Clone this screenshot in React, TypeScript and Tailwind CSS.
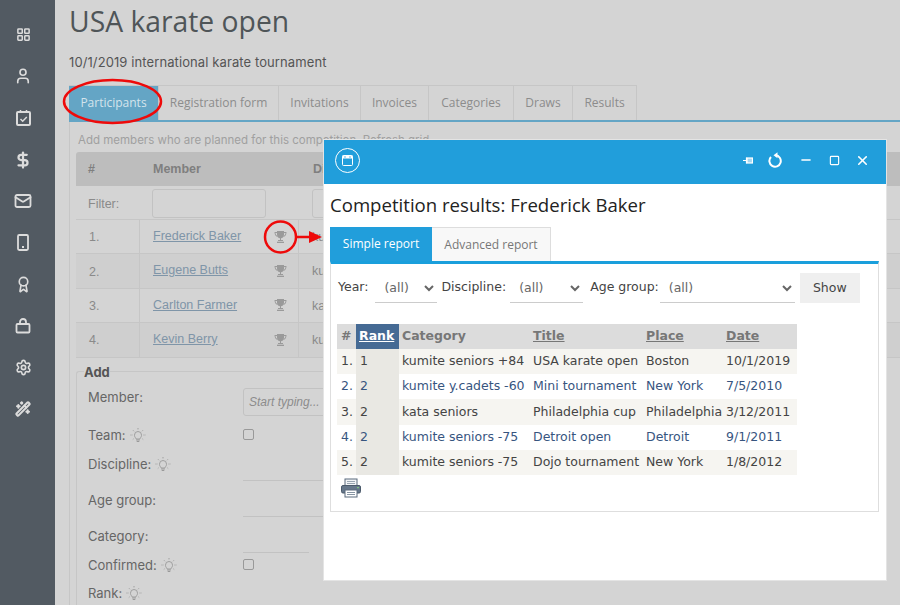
import React from 'react';
import { LayoutGrid, User, DollarSign, Mail, Award, Settings, Wand2, Minus, Square, X } from 'lucide-react';

const Bag = () => (
  <svg width="16" height="16" viewBox="0 0 16 16" fill="none" stroke="currentColor" strokeWidth="1.8"><rect x="1.500" y="6" width="13" height="8.500" rx="1" /><path d="M5 6V4a3 3 0 0 1 6 0v2" /></svg>
);

const Phone = () => (
  <svg width="16" height="17" viewBox="0 0 16 17" fill="none" stroke="currentColor" strokeWidth="1.800"><rect x="3" y="1" width="10" height="15" rx="1.200" /><path d="M7 13h2" /></svg>
);

const Checklist = () => (
  <svg width="15" height="16" viewBox="0 0 15 16" fill="none" stroke="currentColor" strokeWidth="2"><rect x="1" y="2" width="13" height="13" rx="1" /><path d="M4.500 0v3M10.500 0v3" strokeWidth="1.500" /><path d="M4.500 9l2.200 2.200L10.800 7" strokeWidth="1.500" /></svg>
);

const Refresh = () => (
  <svg width="15" height="16" viewBox="0 0 15 16" fill="none" stroke="white" strokeWidth="2"><path d="M3 5A5.700 5.700 0 1 0 7.500 3.300" /><path d="M5.500 3.300L9.500 0.300v6z" fill="white" stroke="none" /></svg>
);

const Trophy = () => (
  <svg width="13" height="12" viewBox="0 0 13 12" fill="#9a9a9a"><path d="M3 0h7v3.500C10 6 8.500 7 7 7.300V9h2v1H4V9h2V7.300C4.500 7 3 6 3 3.500z" /><path d="M0.500 1h2.500v1H1.500c0 1.500 1 2.500 2 3L3.500 6C1.500 5.300 0.500 3.500 0.500 1zM12.500 1H10v1h1.500c0 1.500-1 2.500-2 3l0 1c2-.7 3-2.500 3-5z" /><rect x="3" y="10.700" width="7" height="1.300" /></svg>
);

const Bulb = () => (
  <svg width="16" height="17" viewBox="0 0 16 17" fill="none" stroke="#999" strokeWidth="0.900" className="inline-block ml-1 align-[-4px]">
    <path d="M5.300 10.500C4.500 9.500 4.500 8.800 4.500 8a3.500 3.500 0 0 1 7 0c0 .8 0 1.500-.8 2.500-.4.500-.7 1-.7 1.500H6c0-.5-.3-1-.7-1.500z" />
    <path d="M6.200 13h3.600M6.700 14.500h2.600" strokeWidth="1.200" />
    <path d="M8 1v2M2.800 3l1.300 1.400M13.200 3l-1.300 1.400M0.500 8h2M13.500 8h2M2.800 12.500l1.200-1M13.200 12.500l-1.200-1" strokeDasharray="1 0.600" />
  </svg>
);

const Printer = () => (
  <svg width="20" height="20" viewBox="0 0 20 20">
    <rect x="4" y="1" width="12" height="7" fill="#f2f4f6" stroke="#5a6a7c" />
    <path d="M6 3.500h8M6 5.500h8" stroke="#9aa6b2" />
    <rect x="0.500" y="7.500" width="19" height="7.500" rx="1.500" fill="#66778a" stroke="#4b5a6b" />
    <rect x="16" y="9" width="2" height="1.200" fill="#7ec07e" />
    <rect x="4" y="12" width="12" height="7" fill="#fff" stroke="#5a6a7c" />
    <path d="M6 14.500h8M6 16.500h8" stroke="#8795a3" />
  </svg>
);

const navIcons = [
  <LayoutGrid size={15} strokeWidth={2.400} />, <User size={18} strokeWidth={2.200} />, <Checklist />, <DollarSign size={18} strokeWidth={3} />, <Mail size={18} strokeWidth={2.400} />,
  <Phone />, <Award size={17} strokeWidth={2.300} />, <Bag />, <Settings size={17} strokeWidth={2.300} />, <Wand2 size={16} strokeWidth={3} />,
];

const mainTabs = [
  ['Participants', 'w-[90px]'],
  ['Registration form', 'w-[120px]'],
  ['Invitations', 'w-[82px]'],
  ['Invoices', 'w-[68px]'],
  ['Categories', 'w-[85px]'],
  ['Draws', 'w-[59px]'],
  ['Results', 'w-[64px]'],
];

const members = [
  ['1.', 'Frederick Baker', 'ku'],
  ['2.', 'Eugene Butts', 'ku'],
  ['3.', 'Carlton Farmer', 'ka'],
  ['4.', 'Kevin Berry', 'ku'],
];

const results = [
  ['1.', '1', 'kumite seniors +84', 'USA karate open', 'Boston', '10/1/2019'],
  ['2.', '2', 'kumite y.cadets -60', 'Mini tournament', 'New York', '7/5/2010'],
  ['3.', '2', 'kata seniors', 'Philadelphia cup', 'Philadelphia', '3/12/2011'],
  ['4.', '2', 'kumite seniors -75', 'Detroit open', 'Detroit', '9/1/2011'],
  ['5.', '2', 'kumite seniors -75', 'Dojo tournament', 'New York', '1/8/2012'],
];

const labelCls = "w-[155px] shrink-0 text-[13px] text-[#666] font-['Inter',sans-serif]";

const App: React.FC = () => {
  return (
    <div className="relative flex w-[900px] h-[605px] overflow-hidden bg-[#d4d4d4]">
      {/* Sidebar */}
      <aside className="w-[55px] shrink-0 bg-[#525a62] flex flex-col pt-[14px] pr-[9px] text-[#dcdcdc]">
        {navIcons.map((icon, i) => (
          <div key={i} className="h-[41.600px] flex items-center justify-center">{icon}</div>
        ))}
      </aside>

      {/* Page */}
      <main className="flex-1 pl-[14px] min-w-0">
        <h1 className="h-[43px] text-[28.300px] leading-[43px] text-[#4f5558] font-['Open_Sans',sans-serif]">USA karate open</h1>
        <p className="mt-[10px] h-[19px] text-[13px] leading-[19px] tracking-[0.100px] text-[#555] font-['Inter',sans-serif] whitespace-nowrap">10/1/2019 international karate tournament</p>

        <div className="flex mt-[13px] h-[35px]">
          {mainTabs.map(([name, w], i) => (
            <div key={name} className={`${w} flex items-center justify-center text-[12px] font-['Open_Sans',sans-serif] border-t border-r border-[#c6c6c6] ${i === 0 ? 'bg-[#64a5c5] text-[#d4e4ec]' : 'text-[#8c8c8c]'}`}>{name}</div>
          ))}
        </div>
        <div className="h-[2px] bg-[#64a5c5]" />

        <section className="border-l border-[#c6c6c6] pl-[6px] h-[483px]">
          <p className="pt-[11px] pl-[2px] h-[30px] text-[11.500px] leading-[15px] text-[#a0a0a0] font-['Inter',sans-serif] whitespace-nowrap">Add members who are planned for this competition. Refresh grid</p>

          {/* Members grid */}
          <div className="w-[900px] text-[12.500px] font-['Liberation_Sans',sans-serif]">
            <div className="flex h-[34px] items-center pt-[1px] bg-[#bdbdbd] font-bold text-[#7f7f7f] rounded-tl-[3px]">
              <div className="w-[64px] pl-[12px]">#</div>
              <div className="w-[159px] pl-[13px]">Member</div>
              <div className="pl-[14px]">Discipline</div>
            </div>
            <div className="flex h-[34px] items-center pt-[1px] text-[#8a8a8a] border-b border-[#c6c6c6]">
              <div className="w-[64px] pl-[12px] pt-[2px]">Filter:</div>
              <div className="w-[159px] pl-[12px]"><div className="w-[114px] h-[29px] border border-[#c2c2c2] rounded-[3px]" /></div>
              <div className="pl-[13px]"><div className="w-[114px] h-[29px] border border-[#c2c2c2] rounded-[3px]" /></div>
            </div>
            {members.map(([n, name, d], i) => (
              <div key={n} className={`flex h-[34.400px] items-stretch border-b border-[#c6c6c6] text-[#8a8a8a] ${i % 2 === 1 ? 'bg-[#cfcfcf]' : ''}`}>
                <div className="w-[64px] pl-[13px] pt-[2px] flex items-center border-r border-[#c6c6c6]">{n}</div>
                <div className="w-[159px] pl-[13px] pr-[11px] flex items-center justify-between border-r border-[#c6c6c6]">
                  <a className="underline text-[#7f95a8] -mt-[1px]">{name}</a>
                  <Trophy />
                </div>
                <div className="pl-[13px] pt-[1px] flex items-center">{d}</div>
              </div>
            ))}
          </div>

          {/* Add form */}
          <fieldset className="mt-[6px] border-t border-l border-[#c6c6c6] rounded-tl-[3px] pl-[11px] w-[700px] h-[300px]">
            <legend className="-ml-[4px] text-[13px] font-bold text-[#555] font-['Inter',sans-serif] leading-[16px]">Add</legend>
            <div className="flex items-start h-[45px] pt-[8px]">
              <div className={labelCls}>Member:</div>
              <div className="w-[200px] h-[28px] border border-[#c2c2c2] rounded-[3px] pl-[5px] text-[12px] leading-[26px] italic text-[#8c8c8c] font-['Liberation_Sans',sans-serif]">Start typing...</div>
            </div>
            <div className="flex items-start h-[28px]">
              <div className={labelCls + ' pt-[1px]'}>Team:<Bulb /></div>
              <div className="w-[11px] h-[11px] mt-[4px] border border-[#999] rounded-[2px]" />
            </div>
            <div className="flex items-start h-[28px]">
              <div className={labelCls + ' pt-[2px]'}>Discipline:<Bulb /></div>
              <div className="w-[200px] h-[28px] border-b border-[#c2c2c2]" />
            </div>
            <div className="flex items-start h-[36px]">
              <div className={labelCls + ' pt-[10px]'}>Age group:</div>
              <div className="w-[200px] h-[36px] border-b border-[#c2c2c2]" />
            </div>
            <div className="flex items-start h-[36px]">
              <div className={labelCls + ' pt-[10px]'}>Category:</div>
              <div className="w-[66px] h-[36px] border-b border-[#c2c2c2]" />
            </div>
            <div className="flex items-start h-[28px]">
              <div className={labelCls + ' pt-[3px]'}>Confirmed:<Bulb /></div>
              <div className="w-[11px] h-[11px] mt-[6px] border border-[#999] rounded-[2px]" />
            </div>
            <div className="flex items-start h-[24px]">
              <div className={labelCls + ' pt-[3px]'}>Rank:<Bulb /></div>
            </div>
          </fieldset>
        </section>
      </main>

      {/* Red annotations */}
      <svg className="absolute inset-0 pointer-events-none" width="900" height="605" fill="none">
        <ellipse cx="112.500" cy="101.500" rx="48.500" ry="21.500" stroke="#ee0a0a" strokeWidth="2.500" />
        <circle cx="280.500" cy="237" r="15.500" stroke="#ee0a0a" strokeWidth="2.500" />
        <path d="M296 237h14" stroke="#ee0a0a" strokeWidth="2.500" />
        <path d="M309 231l13 6-13 6z" fill="#ee0a0a" />
      </svg>

      {/* Results window */}
      <div className="absolute left-[323px] top-[139px] w-[564px] h-[442px] bg-white border border-[#e4e4e4] flex flex-col">
        <div className="h-[44px] shrink-0 bg-[#219edb] flex items-center pl-[11px] pr-[16px] pb-[4px] text-white">
          <div className="w-[25px] h-[25px] rounded-full border border-white flex items-center justify-center">
            <svg width="11" height="11" viewBox="0 0 11 11" fill="none" stroke="white"><rect x="0.500" y="0.500" width="10" height="10" rx="1" /><rect x="1" y="1" width="9" height="2" fill="white" /><path d="M3 1v2M8 1v2" stroke="#219edb" strokeWidth="0.700" /></svg>
          </div>
          <div className="ml-auto flex items-center gap-[15px]">
            <svg width="10" height="7" viewBox="0 0 10 7" fill="none" stroke="white" strokeWidth="1.200"><path d="M0 3.500h4M3.500 0.500v6" /><rect x="4" y="1" width="5.500" height="5" fill="white" fillOpacity="0.600" /></svg>
            <Refresh />
            <Minus size={14} strokeWidth={2.500} className="ml-[1px]" />
            <Square size={11} strokeWidth={2.500} className="ml-[1px]" />
            <X size={15} strokeWidth={2.500} />
          </div>
        </div>

        <div className="flex-1 px-[6px] font-['Open_Sans',sans-serif]">
          <h2 className="h-[43px] pt-[8px] text-[18.600px] leading-[26px] text-[#222] whitespace-nowrap">Competition results: Frederick Baker</h2>

          <div className="flex h-[34px]">
            <div className="w-[102px] bg-[#219edb] text-white text-[12px] flex items-center justify-center">Simple report</div>
            <div className="w-[119px] bg-[#f8f8f8] border-t border-r border-[#ddd] text-[#777] text-[12px] flex items-center justify-center">Advanced report</div>
          </div>
          <div className="w-[549px] h-[251px] border-t-[3px] border-t-[#1a9fdc] border-x border-b border-[#dedede] pl-[6px] font-['DejaVu_Sans',sans-serif] text-[12.500px]">
            <div className="flex items-start h-[60px] pt-[9px] text-[#444]">
              <span className="ml-[1px] mt-[5px]">Year:</span>
              <select className="ml-[7px] w-[62px] h-[30px] pl-[5px] border-b border-[#ccc] bg-white text-[#666] outline-none"><option>(all)</option></select>
              <span className="ml-[4px] mt-[5px]">Discipline:</span>
              <select className="ml-[4px] w-[73px] h-[30px] pl-[5px] border-b border-[#ccc] bg-white text-[#666] outline-none"><option>(all)</option></select>
              <span className="ml-[7px] mt-[5px]">Age group:</span>
              <select className="ml-[1px] w-[135px] h-[30px] pl-[5px] border-b border-[#ccc] bg-white text-[#666] outline-none"><option>(all)</option></select>
              <button className="ml-[5px] w-[60px] h-[30px] bg-[#efefef] text-[#444] text-[12.500px]">Show</button>
            </div>

            <table className="border-collapse table-fixed w-[460px] text-[12.500px]">
              <colgroup>
                <col className="w-[19px]" /><col className="w-[43px]" /><col className="w-[131px]" /><col className="w-[113px]" /><col className="w-[80px]" /><col className="w-[74px]" />
              </colgroup>
              <thead>
                <tr className="h-[25px] bg-[#dcdcdc] text-[#777] font-bold text-left">
                  <th className="pl-[4px]">#</th>
                  <th className="pl-[3px] bg-[#456a94] text-white underline">Rank</th>
                  <th className="pl-[3px]">Category</th>
                  <th className="pl-[3px] underline">Title</th>
                  <th className="pl-[3px] underline">Place</th>
                  <th className="pl-[3px] underline">Date</th>
                </tr>
              </thead>
              <tbody>
                {results.map((r, i) => (
                  <tr key={r[0]} className={`h-[25.200px] whitespace-nowrap ${i % 2 === 0 ? 'bg-[#f6f5f1] text-[#444]' : 'bg-white text-[#37557f]'}`}>
                    {r.map((c, j) => (
                      <td key={j} className={j === 1 ? 'pl-[4px] bg-[#e9e8e3]' : j === 0 ? 'pl-[4px]' : 'pl-[3px]'}>{c}</td>
                    ))}
                  </tr>
                ))}
              </tbody>
            </table>
            <div className="pt-[3px] pl-[4px]"><Printer /></div>
          </div>
        </div>
      </div>
    </div>
  );
};

export default App;
